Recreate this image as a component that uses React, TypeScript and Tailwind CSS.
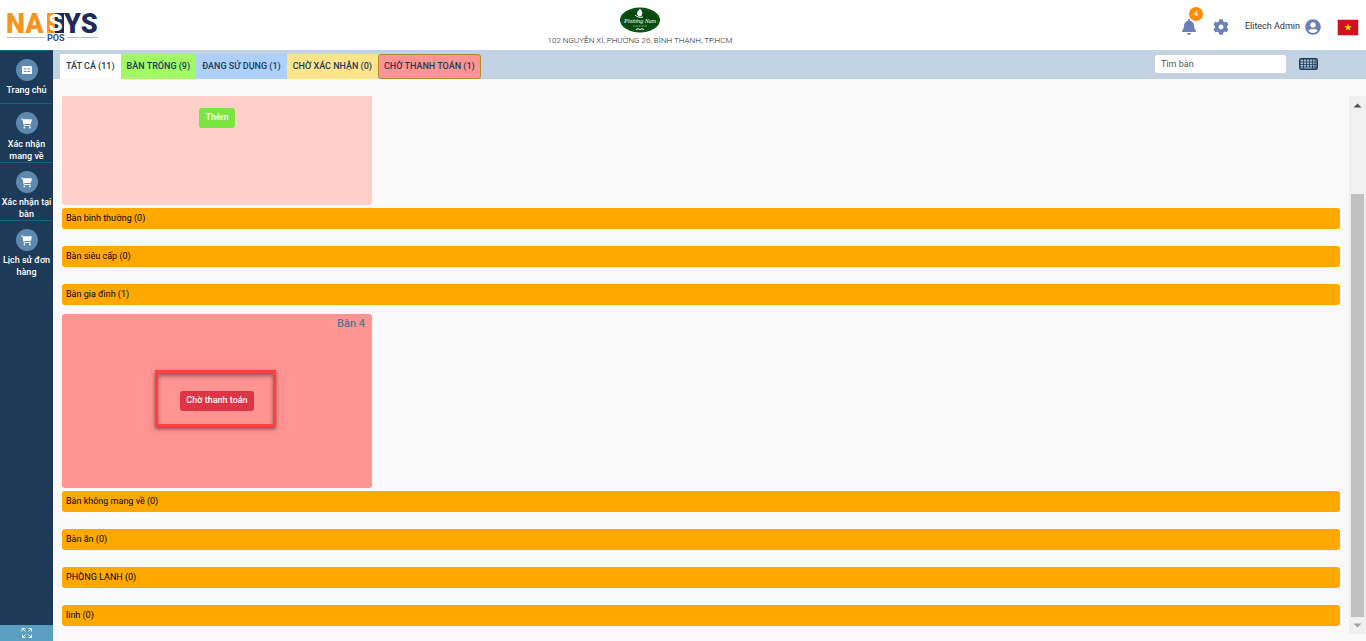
import { useState } from 'react';
import { FaBell, FaCog, FaUserCircle } from 'react-icons/fa';
import { FaCartShopping } from 'react-icons/fa6';

const MENU = [
    { label: 'Trang chủ', icon: 'table', spacing: 'gap-[3px] pb-[7px]' },
    { label: 'Xác nhận mang về', icon: 'cart', spacing: 'gap-1' },
    { label: 'Xác nhận tại bàn', icon: 'cart', spacing: 'gap-[3px]' },
    { label: 'Lịch sử đơn hàng', icon: 'cart', spacing: 'gap-[3px]' },
];

const TABS = [
    { key: 'all', label: 'TẤT CẢ (11)', color: 'bg-white border-white' },
    { key: 'empty', label: 'BÀN TRỐNG (9)', color: 'bg-[#a0f965] border-[#a0f965]' },
    { key: 'used', label: 'ĐANG SỬ DỤNG (1)', color: 'bg-[#aed0ff] border-[#aed0ff]' },
    { key: 'confirm', label: 'CHỜ XÁC NHẬN (0)', color: 'bg-[#ffe48c] border-[#ffe48c]' },
    { key: 'payment', label: 'CHỜ THANH TOÁN (1)', color: 'bg-[#ff9493] border-[#b08a2e] rounded-[3px]' },
];

function Logo() {
    return (
        <svg viewBox="0 0 96 44" className="h-11 w-24" role="img" aria-label="NASYS POS">
            <path d="M41 10h8v20h-8z" fill="#f7941e" />
            <path d="M49 10h9v20h-9z" fill="#1b2b5b" />
            <g fontFamily="Roboto, sans-serif" fontWeight="900" fontSize="27">
                <text x="0" y="30" fill="#f7941e">NA</text>
                <text x="49.500" y="28" textAnchor="middle" fontSize="23" fontWeight="700" fill="#fff">S</text>
                <text x="58" y="30" fill="#1b2b5b">YS</text>
            </g>
            <path d="M1 34.500h38M61 34.500h31" stroke="#b9bccb" />
            <text x="41" y="38" fontFamily="Roboto, sans-serif" fontWeight="700" fontSize="9" fill="#2d4f92">POS</text>
        </svg>
    );
}

function RestaurantLogo() {
    return (
        <svg viewBox="0 0 40 26" className="w-10 h-[26px]" role="img" aria-label="Phương Nam">
            <ellipse cx="20" cy="13" rx="20" ry="12.500" fill="#06490f" />
            <ellipse cx="20" cy="13" rx="18.500" ry="11.300" fill="none" stroke="#2c6d35" strokeWidth=".5" />
            <path d="M17 7c0-3 2-4 3-5 2 2 3 3 2 6-1 2-4 2-5-1z" fill="#fff" />
            <path d="M15 8c2 2 5 3 8 2" fill="none" stroke="#fff" />
            <text x="20" y="16" textAnchor="middle" fontFamily="Liberation Serif, serif" fontStyle="italic" fontSize="6" fill="#fff">Phương Nam</text>
            <path d="M13 19h14" stroke="#8fb594" strokeDasharray="1 .5" />
            <path d="M16 22.500q2-1.500 4 0 2-1.500 4 0" fill="none" stroke="#fff" />
        </svg>
    );
}

function TableIcon() {
    return (
        <svg viewBox="0 0 10 8" className="w-[10px] h-2">
            <rect width="10" height="8" rx="1" fill="#fff" />
            <path d="M2 2.500h2.500v1h-2.500zM5.500 2.500h2.500v1h-2.500zM2 5h2.500v1h-2.500zM5.500 5h2.500v1h-2.500z" fill="#5e88b0" />
        </svg>
    );
}

function KeyboardIcon() {
    return (
        <svg viewBox="0 0 19 12" className="w-[19px] h-3">
            <rect x=".75" y=".75" width="17.500" height="10.500" rx="1.500" fill="#a9bdd0" stroke="#1d3b58" strokeWidth="1.500" />
            <path d="M1 4h17M1 6.500h17M1 9h17" stroke="#1d3b58" strokeWidth=".8" />
            <path d="M4.500 1v10M7.500 1v8M10.500 1v8M13.500 1v10M16 1v10" stroke="#1d3b58" strokeWidth=".8" />
        </svg>
    );
}

function Group({ name }: { name: string }) {
    return <h2 className="h-[21px] rounded-[3px] bg-[#ffa900] px-1 text-[9px] leading-[21px] text-black">{name}</h2>;
}

function Sidebar() {
    return (
        <nav className="flex w-[53px] shrink-0 flex-col border-t border-[#0f6688] bg-[#1d3b58]">
            {MENU.map((m, i) => (
                <a
                    key={m.label}
                    href="#"
                    className={`flex flex-col items-center pt-2 text-center text-[9px] font-medium leading-3 text-white ${m.spacing} ${i < MENU.length - 1 ? 'border-b border-[#0f6688]' : ''}`}
                >
                    <span className="flex size-[22px] items-center justify-center rounded-full bg-[#5e88b0]">
                        {m.icon === 'table' ? <TableIcon /> : <FaCartShopping size={11} />}
                    </span>
                    {m.label}
                </a>
            ))}
            <button type="button" aria-label="Toàn màn hình" className="mt-auto flex h-4 items-center justify-center bg-[#5b9fc0]">
                <svg viewBox="0 0 12 12" className="size-3" fill="none" stroke="#e4f0f6">
                    <path d="M1 4.500V1.500H4.500M1.500 1.500l3 3M7.500 1.500h3v3M10.500 1.500l-3 3M1.500 7.500v3h3M1.500 10.500l3-3M10.500 7.500v3h-3M10.500 10.500l-3-3" />
                </svg>
            </button>
        </nav>
    );
}

function ScrollBar() {
    return (
        <div className="flex w-[17px] shrink-0 flex-col items-center bg-[#f0f0f0]" aria-hidden="true">
            <svg viewBox="0 0 17 17" className="size-[17px] shrink-0"><path d="M4.500 11.500l4-4 4 4z" fill="#505050" /></svg>
            <div className="mt-[81px] w-[13px] flex-1 bg-[#c1c1c1]" />
            <svg viewBox="0 0 17 17" className="size-[17px] shrink-0"><path d="M4.500 6.500l4 4 4-4z" fill="#a3a3a3" /></svg>
        </div>
    );
}

export default function App() {
    const [tab, setTab] = useState('payment');
    const [search, setSearch] = useState('');

    return (
        <div className="flex h-screen flex-col overflow-hidden bg-[#f9f9f9] font-[Roboto,sans-serif] text-[9px]">
            <header className="grid h-[50px] shrink-0 grid-cols-[1fr_auto_1fr] bg-white">
                <div className="pl-[6px] pt-[3px]"><Logo /></div>
                <div className="flex flex-col items-center pt-[7px] mr-[86px]">
                    <RestaurantLogo />
                    <p className="text-[8px] font-light leading-4 text-[#222]">102 NGUYỄN XÍ, PHƯỜNG 26, BÌNH THẠNH, TP.HCM</p>
                </div>
                <div className="flex items-center justify-end gap-4 pr-[7px] pt-1 text-[#6b80b5]">
                    <button type="button" aria-label="Thông báo" className="relative">
                        <FaBell size={16} />
                        <span className="absolute -top-3 left-2 size-[14px] rounded-full bg-[#ff8c00] text-center text-[8px] leading-[14px] text-white">4</span>
                    </button>
                    <button type="button" aria-label="Cài đặt"><FaCog size={16} /></button>
                    <div className="flex items-center gap-[5px]">
                        <span className="text-[#333]">Elitech Admin</span>
                        <FaUserCircle size={16} />
                    </div>
                    <button type="button" aria-label="Tiếng Việt">
                        <svg viewBox="0 0 22 17" className="h-[17px] w-[22px]">
                            <rect x=".5" y=".5" width="21" height="16" fill="#d0121f" stroke="#cfcfcf" />
                            <path d="M11 4.500l.95 2.700h2.850l-2.300 1.700.9 2.800-2.400-1.700-2.400 1.700.9-2.800-2.300-1.700h2.850z" fill="#ffde00" />
                        </svg>
                    </button>
                </div>
            </header>

            <div className="flex min-h-0 flex-1">
                <Sidebar />
                <div className="flex min-w-0 flex-1 flex-col">
                    <div className="flex h-[29px] shrink-0 items-end bg-[#c1d2e2] pl-[7px]">
                        {TABS.map((t) => (
                            <button
                                key={t.key}
                                type="button"
                                aria-pressed={tab === t.key}
                                onClick={() => setTab(t.key)}
                                className={`h-[25px] border px-[5px] text-[9px] font-medium text-[#1d3b58] ${t.color}`}
                            >
                                {t.label}
                            </button>
                        ))}
                        <div className="ml-auto flex h-full items-center gap-3 pr-12 pb-[2px]">
                            <input
                                aria-label="Tìm bàn"
                                placeholder="Tìm bàn"
                                value={search}
                                onChange={(e) => setSearch(e.target.value)}
                                className="h-5 w-[133px] rounded-[3px] border border-[#ccd3da] bg-white px-[6px] text-[9px] placeholder:text-[#555]"
                            />
                            <button type="button" aria-label="Bàn phím"><KeyboardIcon /></button>
                        </div>
                    </div>

                    <div className="mt-[17px] mb-[7px] flex min-h-0 flex-1">
                        <main className="min-w-0 flex-1 overflow-hidden px-[9px]">
                            <section className="mb-[3px] flex h-[109px] w-[310px] items-start justify-center rounded-b-[3px] bg-[#ffcfc9] pt-3">
                                <button type="button" className="h-5 rounded-[3px] bg-[#7be544] px-[6px] font-medium text-white">Thêm</button>
                            </section>
                            <div className="flex flex-col gap-[17px]">
                                <Group name="Bàn bình thường (0)" />
                                <Group name="Bàn siêu cấp (0)" />
                                <Group name="Bàn gia đình (1)" />
                            </div>
                            <section className="relative mt-[9px] mb-[3px] flex h-[174px] w-[310px] items-center justify-center rounded-[3px] bg-[#ff9493]">
                                <h3 className="absolute right-[7px] top-[2px] text-[11px] font-medium leading-4 text-[#4f7896]">Bàn 4</h3>
                                <button type="button" className="h-5 rounded-[3px] bg-[#dc3545] px-[6px] font-medium text-white">Chờ thanh toán</button>
                                <div className="pointer-events-none absolute left-[93px] top-14 h-[57px] w-[121px] border-3 border-[#ff4040] shadow-[0_2px_4px_rgba(0,0,0,0.5),inset_0_3px_4px_rgba(0,0,0,0.4)]" />
                            </section>
                            <div className="flex flex-col gap-[17px]">
                                <Group name="Bàn không mang về (0)" />
                                <Group name="Bàn ăn (0)" />
                                <Group name="PHÒNG LẠNH (0)" />
                                <Group name="linh (0)" />
                            </div>
                        </main>
                        <ScrollBar />
                    </div>
                </div>
            </div>
        </div>
    );
}
